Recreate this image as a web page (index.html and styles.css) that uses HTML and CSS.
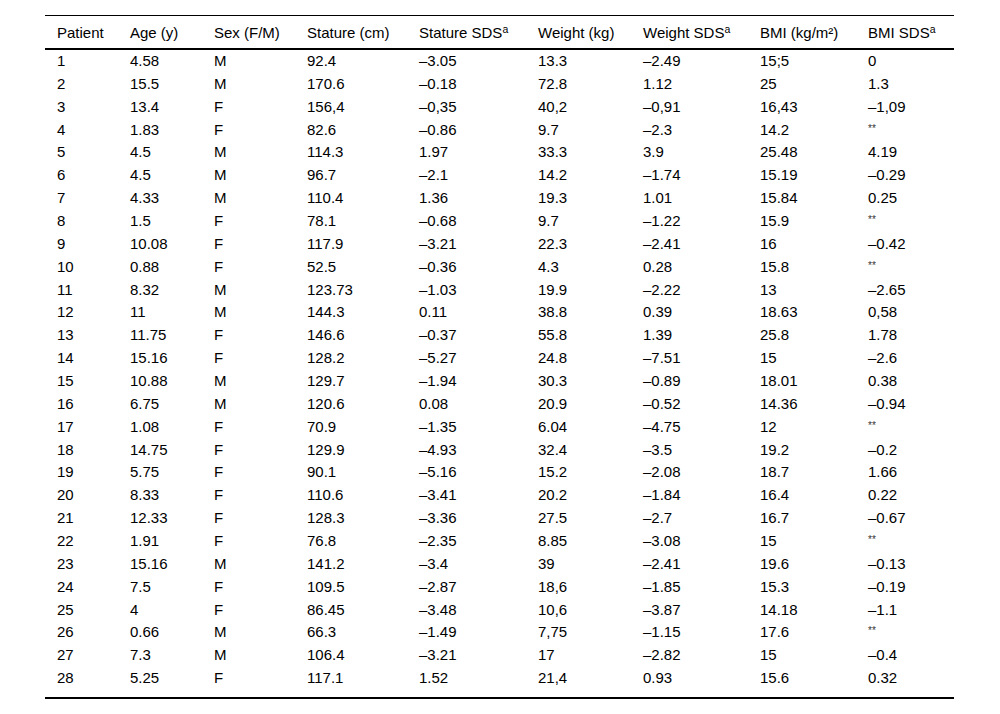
FILE: index.html
```html
<!DOCTYPE html>
<html>
<head>
<meta charset="utf-8">
<link rel="stylesheet" href="styles.css">
</head>
<body>
<table class="data">
<colgroup>
<col class="c1"><col class="c2"><col class="c3"><col class="c4"><col class="c5"><col class="c6"><col class="c7"><col class="c8"><col class="c9">
</colgroup>
<thead>
<tr><th>Patient</th><th>Age (y)</th><th>Sex (F/M)</th><th>Stature (cm)</th><th>Stature SDS<sup>a</sup></th><th>Weight (kg)</th><th>Weight SDS<sup>a</sup></th><th>BMI (kg/m²)</th><th>BMI SDS<sup>a</sup></th></tr>
</thead>
<tbody>
<tr><td>1</td><td>4.58</td><td>M</td><td>92.4</td><td>–3.05</td><td>13.3</td><td>–2.49</td><td>15;5</td><td>0</td></tr>
<tr><td>2</td><td>15.5</td><td>M</td><td>170.6</td><td>–0.18</td><td>72.8</td><td>1.12</td><td>25</td><td>1.3</td></tr>
<tr><td>3</td><td>13.4</td><td>F</td><td>156,4</td><td>–0,35</td><td>40,2</td><td>–0,91</td><td>16,43</td><td>–1,09</td></tr>
<tr><td>4</td><td>1.83</td><td>F</td><td>82.6</td><td>–0.86</td><td>9.7</td><td>–2.3</td><td>14.2</td><td class="ast">**</td></tr>
<tr><td>5</td><td>4.5</td><td>M</td><td>114.3</td><td>1.97</td><td>33.3</td><td>3.9</td><td>25.48</td><td>4.19</td></tr>
<tr><td>6</td><td>4.5</td><td>M</td><td>96.7</td><td>–2.1</td><td>14.2</td><td>–1.74</td><td>15.19</td><td>–0.29</td></tr>
<tr><td>7</td><td>4.33</td><td>M</td><td>110.4</td><td>1.36</td><td>19.3</td><td>1.01</td><td>15.84</td><td>0.25</td></tr>
<tr><td>8</td><td>1.5</td><td>F</td><td>78.1</td><td>–0.68</td><td>9.7</td><td>–1.22</td><td>15.9</td><td class="ast">**</td></tr>
<tr><td>9</td><td>10.08</td><td>F</td><td>117.9</td><td>–3.21</td><td>22.3</td><td>–2.41</td><td>16</td><td>–0.42</td></tr>
<tr><td>10</td><td>0.88</td><td>F</td><td>52.5</td><td>–0.36</td><td>4.3</td><td>0.28</td><td>15.8</td><td class="ast">**</td></tr>
<tr><td>11</td><td>8.32</td><td>M</td><td>123.73</td><td>–1.03</td><td>19.9</td><td>–2.22</td><td>13</td><td>–2.65</td></tr>
<tr><td>12</td><td>11</td><td>M</td><td>144.3</td><td>0.11</td><td>38.8</td><td>0.39</td><td>18.63</td><td>0,58</td></tr>
<tr><td>13</td><td>11.75</td><td>F</td><td>146.6</td><td>–0.37</td><td>55.8</td><td>1.39</td><td>25.8</td><td>1.78</td></tr>
<tr><td>14</td><td>15.16</td><td>F</td><td>128.2</td><td>–5.27</td><td>24.8</td><td>–7.51</td><td>15</td><td>–2.6</td></tr>
<tr><td>15</td><td>10.88</td><td>M</td><td>129.7</td><td>–1.94</td><td>30.3</td><td>–0.89</td><td>18.01</td><td>0.38</td></tr>
<tr><td>16</td><td>6.75</td><td>M</td><td>120.6</td><td>0.08</td><td>20.9</td><td>–0.52</td><td>14.36</td><td>–0.94</td></tr>
<tr><td>17</td><td>1.08</td><td>F</td><td>70.9</td><td>–1.35</td><td>6.04</td><td>–4.75</td><td>12</td><td class="ast">**</td></tr>
<tr><td>18</td><td>14.75</td><td>F</td><td>129.9</td><td>–4.93</td><td>32.4</td><td>–3.5</td><td>19.2</td><td>–0.2</td></tr>
<tr><td>19</td><td>5.75</td><td>F</td><td>90.1</td><td>–5.16</td><td>15.2</td><td>–2.08</td><td>18.7</td><td>1.66</td></tr>
<tr><td>20</td><td>8.33</td><td>F</td><td>110.6</td><td>–3.41</td><td>20.2</td><td>–1.84</td><td>16.4</td><td>0.22</td></tr>
<tr><td>21</td><td>12.33</td><td>F</td><td>128.3</td><td>–3.36</td><td>27.5</td><td>–2.7</td><td>16.7</td><td>–0.67</td></tr>
<tr><td>22</td><td>1.91</td><td>F</td><td>76.8</td><td>–2.35</td><td>8.85</td><td>–3.08</td><td>15</td><td class="ast">**</td></tr>
<tr><td>23</td><td>15.16</td><td>M</td><td>141.2</td><td>–3.4</td><td>39</td><td>–2.41</td><td>19.6</td><td>–0.13</td></tr>
<tr><td>24</td><td>7.5</td><td>F</td><td>109.5</td><td>–2.87</td><td>18,6</td><td>–1.85</td><td>15.3</td><td>–0.19</td></tr>
<tr><td>25</td><td>4</td><td>F</td><td>86.45</td><td>–3.48</td><td>10,6</td><td>–3.87</td><td>14.18</td><td>–1.1</td></tr>
<tr><td>26</td><td>0.66</td><td>M</td><td>66.3</td><td>–1.49</td><td>7,75</td><td>–1.15</td><td>17.6</td><td class="ast">**</td></tr>
<tr><td>27</td><td>7.3</td><td>M</td><td>106.4</td><td>–3.21</td><td>17</td><td>–2.82</td><td>15</td><td>–0.4</td></tr>
<tr class="last"><td>28</td><td>5.25</td><td>F</td><td>117.1</td><td>1.52</td><td>21,4</td><td>0.93</td><td>15.6</td><td>0.32</td></tr>
</tbody>
</table>
</body>
</html>
```
FILE: styles.css
```css
html, body {
  margin: 0;
  padding: 0;
  background: #fff;
}

body {
  font-family: "Liberation Sans", Arial, sans-serif;
  font-size: 15px;
  color: #000;
}

.data {
  margin: 15px 0 0 45px;
  width: 909px;
  table-layout: fixed;
  border-collapse: collapse;
  border-top: 1px solid #000;
  border-bottom: 2px solid #000;
}

.c1 { width: 73px; }
.c2 { width: 84px; }
.c3 { width: 93px; }
.c4 { width: 112px; }
.c5 { width: 119px; }
.c6 { width: 105px; }
.c7 { width: 117px; }
.c8 { width: 108px; }
.c9 { width: 98px; }

.data thead tr {
  border-bottom: 2px solid #000;
}

.data th {
  font-weight: normal;
  text-align: left;
  padding: 2px 0 0 12px;
  height: 30px;
  line-height: 30px;
  white-space: nowrap;
}

.data sup {
  font-size: 0.7em;
  vertical-align: 0.45em;
  line-height: 0;
}

.data td {
  padding: 0 0 0 12px;
  height: 22.86px;
  line-height: 22.86px;
  white-space: nowrap;
}

.data tr.last td {
  padding-bottom: 6.5px;
  vertical-align: top;
}

.data td.ast {
  font-size: 10px;
  color: #333;
  vertical-align: top;
  line-height: 20px;
}
```
